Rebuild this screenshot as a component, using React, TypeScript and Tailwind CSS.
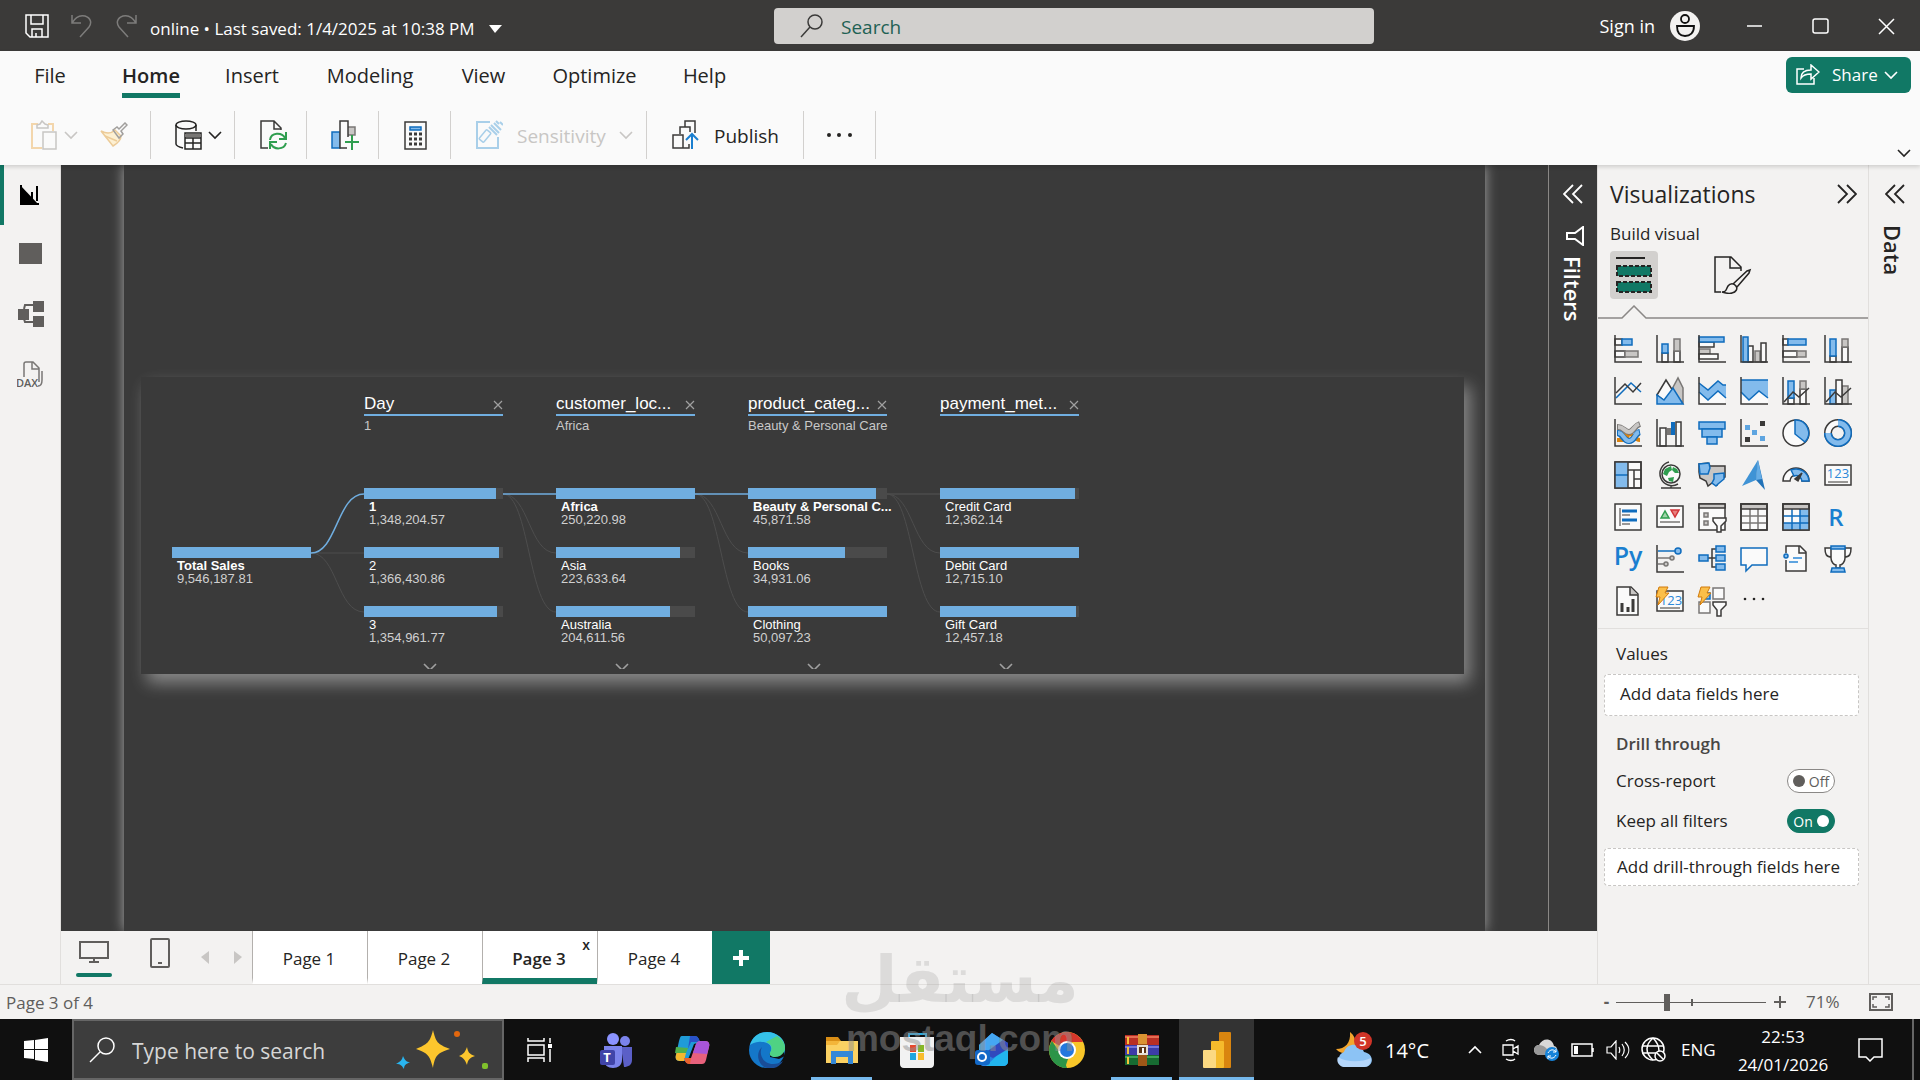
import { useState, type ReactNode } from "react";
import clsx from "clsx";

const DARK = "#3b3a39";
const BLUE = "#83bbec";
const EDGE = "#0f6cbd";
const GRAY = "#c8c6c4";
const GRAY_EDGE = "#797775";
const PAPER = "#fafafa";

type IconProps = {
  children: ReactNode;
  w?: number;
  h?: number;
  className?: string;
};

function Icon({ children, w = 28, h = 28, className }: IconProps) {
  return (
    <svg
      width={w}
      height={h}
      viewBox={`0 0 ${w} ${h}`}
      fill="none"
      stroke="currentColor"
      strokeWidth="1.5"
      className={clsx("shrink-0", className)}
      aria-hidden="true"
    >
      {children}
    </svg>
  );
}

function Chevron({ className, w = 14 }: { className?: string; w?: number }) {
  return (
    <svg width={w} height="9" viewBox="0 0 14 9" fill="none" stroke="currentColor" strokeWidth="1.6" className={clsx("shrink-0", className)} aria-hidden="true">
      <path d="M1 1l6 6 6-6" />
    </svg>
  );
}

function DoubleChevron({ flip }: { flip?: boolean }) {
  return (
    <Icon w={20} h={20} className={flip ? "rotate-180" : ""}>
      <path d="M10 1L1 10l9 9M19 1l-9 9 9 9" strokeWidth="1.8" />
    </Icon>
  );
}

type BarProps = {
  x: number;
  y: number;
  w: number;
  h: number;
  tone: "blue" | "gray" | "white";
};

function Bar({ x, y, w, h, tone }: BarProps) {
  const fill = tone === "blue" ? BLUE : tone === "gray" ? GRAY : PAPER;
  const stroke = tone === "blue" ? EDGE : tone === "gray" ? GRAY_EDGE : DARK;
  return <rect x={x} y={y} width={w} height={h} fill={fill} stroke={stroke} />;
}

const axis = <path d="M1 0V27H28" stroke={DARK} />;

const funnel = (
  <path d="M15 15h13v3l-5 5v6h-4v-6l-4-5z" fill={PAPER} stroke={DARK} />
);

const bolt = (
  <path d="M3 0h9l-3 6h4L2 18l2-8H0z" fill="#fbbf4a" stroke="#d17a0a" strokeWidth="1" />
);

const visuals: { name: string; art: ReactNode }[] = [
  {
    name: "Stacked bar chart",
    art: (
      <>
        <Bar x={1} y={4} w={7} h={6} tone="white" />
        <Bar x={8} y={4} w={10} h={6} tone="blue" />
        <Bar x={1} y={16} w={10} h={6} tone="white" />
        <Bar x={11} y={16} w={13} h={6} tone="gray" />
        {axis}
      </>
    ),
  },
  {
    name: "Stacked column chart",
    art: (
      <>
        <Bar x={6} y={18} w={6} h={9} tone="white" />
        <Bar x={6} y={9} w={6} h={9} tone="blue" />
        <Bar x={18} y={16} w={6} h={11} tone="white" />
        <Bar x={18} y={4} w={6} h={12} tone="gray" />
        {axis}
      </>
    ),
  },
  {
    name: "Clustered bar chart",
    art: (
      <>
        <Bar x={1} y={7} w={15} h={5} tone="white" />
        <Bar x={1} y={14} w={11} h={5} tone="gray" />
        <Bar x={1} y={19} w={19} h={5} tone="white" />
        <Bar x={1} y={2} w={25} h={5} tone="blue" />
        {axis}
      </>
    ),
  },
  {
    name: "Clustered column chart",
    art: (
      <>
        <Bar x={8} y={11} w={5} h={16} tone="white" />
        <Bar x={15} y={16} w={5} h={11} tone="gray" />
        <Bar x={21} y={8} w={5} h={19} tone="white" />
        <Bar x={3} y={2} w={5} h={25} tone="blue" />
        {axis}
      </>
    ),
  },
  {
    name: "100% stacked bar chart",
    art: (
      <>
        <Bar x={1} y={4} w={5} h={6} tone="white" />
        <Bar x={6} y={4} w={18} h={6} tone="blue" />
        <Bar x={1} y={16} w={14} h={6} tone="white" />
        <Bar x={15} y={16} w={9} h={6} tone="gray" />
        {axis}
      </>
    ),
  },
  {
    name: "100% stacked column chart",
    art: (
      <>
        <Bar x={6} y={21} w={6} h={6} tone="white" />
        <Bar x={6} y={4} w={6} h={17} tone="blue" />
        <Bar x={18} y={12} w={6} h={15} tone="white" />
        <Bar x={18} y={4} w={6} h={8} tone="gray" />
        {axis}
      </>
    ),
  },
  {
    name: "Line chart",
    art: (
      <>
        <path d="M2 21L17 6l10 9" stroke={EDGE} />
        <path d="M2 16l9-9 8 8 8-9" stroke={DARK} />
        {axis}
      </>
    ),
  },
  {
    name: "Area chart",
    art: (
      <>
        <path d="M15 14l7-13 5 10v15z" fill={GRAY} stroke={GRAY_EDGE} />
        <path d="M1 18L10 3l9 14-9 8z" fill={PAPER} stroke={DARK} />
        <path d="M1 18l7 5 9-12 10 16H1z" fill={BLUE} stroke={EDGE} />
      </>
    ),
  },
  {
    name: "Stacked area chart",
    art: (
      <>
        <path d="M1 17l9 6 10-10 7 6v8H1z" fill={PAPER} stroke="none" />
        <path d="M1 6l9 7L20 4l5 4h3v13l-8-7-10 9-9-8z" fill={BLUE} stroke="none" />
        <path d="M1 6l9 7L20 4l5 4h3M1 15l9 8 10-9 8 7" stroke={EDGE} />
        {axis}
      </>
    ),
  },
  {
    name: "100% stacked area chart",
    art: (
      <>
        <path d="M1 15l8 8 10-9 9 7v6H1z" fill={PAPER} stroke="none" />
        <path d="M1 3h27v18l-9-7-10 9-8-8z" fill={BLUE} stroke="none" />
        <path d="M1 3h27M1 15l8 8 10-9 9 7" stroke={EDGE} />
        {axis}
      </>
    ),
  },
  {
    name: "Line and stacked column chart",
    art: (
      <>
        <Bar x={6} y={21} w={6} h={6} tone="white" />
        <Bar x={6} y={4} w={6} h={17} tone="blue" />
        <Bar x={18} y={12} w={6} h={15} tone="white" />
        <Bar x={18} y={4} w={6} h={8} tone="gray" />
        <path d="M2 25l9-10 6 5 10-9" stroke={DARK} />
        {axis}
      </>
    ),
  },
  {
    name: "Line and clustered column chart",
    art: (
      <>
        <Bar x={6} y={13} w={6} h={14} tone="blue" />
        <Bar x={18} y={9} w={6} h={18} tone="gray" />
        <Bar x={12} y={3} w={6} h={24} tone="white" />
        <path d="M2 25l9-10 6 5 10-9" stroke={DARK} />
        {axis}
      </>
    ),
  },
  {
    name: "Ribbon chart",
    art: (
      <>
        <path d="M3 15h5c3 0 5 6 8 6s4-6 10-6M3 21h6c4 0 4-6 7-6s4 6 10 6" stroke="#d9820f" strokeWidth="4" />
        <path d="M3 8c6 0 8 5 12 5s5-6 11-8" stroke={GRAY_EDGE} strokeWidth="6" />
        <path d="M4 8c6 0 7 5 11 5s5-6 10-8" stroke={GRAY} strokeWidth="4" />
        <path d="M3 14c6 0 6 8 12 8s6-8 11-9" stroke={EDGE} strokeWidth="6" />
        <path d="M4 14c6 0 6 8 11 8s6-8 10-9" stroke={BLUE} strokeWidth="4" />
        {axis}
      </>
    ),
  },
  {
    name: "Waterfall chart",
    art: (
      <>
        <Bar x={4} y={9} w={6} h={18} tone="white" />
        <rect x="11" y="9" width="4" height="7" fill={GRAY_EDGE} stroke="none" />
        <rect x="15" y="3" width="4" height="13" fill={EDGE} stroke="none" />
        <Bar x={20} y={3} w={5} h={24} tone="white" />
        {axis}
      </>
    ),
  },
  {
    name: "Funnel",
    art: (
      <>
        <Bar x={1} y={3} w={26} h={7} tone="blue" />
        <Bar x={4} y={10} w={20} h={8} tone="blue" />
        <Bar x={9} y={18} w={10} h={7} tone="blue" />
      </>
    ),
  },
  {
    name: "Scatter chart",
    art: (
      <>
        <g stroke="none">
          <path d="M20 2h5v5h-5zM5 18h5v5H5z" fill={DARK} />
          <path d="M5 6h5v5H5zM12 11h5v5h-5zM20 17h5v5h-5z" fill="#5ea5e0" />
        </g>
        {axis}
      </>
    ),
  },
  {
    name: "Pie chart",
    art: (
      <>
        <circle cx="14" cy="14" r="13" fill={PAPER} stroke={DARK} />
        <path d="M13 1a13 13 0 0 1 10 22L13 15z" fill={BLUE} stroke={EDGE} />
      </>
    ),
  },
  {
    name: "Donut chart",
    art: (
      <>
        <circle cx="14" cy="14" r="10" stroke={DARK} strokeWidth="8" />
        <circle cx="14" cy="14" r="10" stroke={PAPER} strokeWidth="5" />
        <path d="M14 4a10 10 0 1 1-10 10" stroke={EDGE} strokeWidth="8" />
        <path d="M14 4a10 10 0 1 1-10 10" stroke={BLUE} strokeWidth="5" />
      </>
    ),
  },
  {
    name: "Treemap",
    art: (
      <>
        <rect x="1" y="1" width="26" height="26" fill={PAPER} stroke={DARK} />
        <path d="M1 1h13v26H1z" fill={BLUE} stroke="none" />
        <path d="M1 14h13" stroke={EDGE} />
        <path d="M14 1v26M14 9h13M20 9v18M20 18h7" stroke={DARK} />
        <rect x="1" y="1" width="26" height="26" stroke={DARK} />
      </>
    ),
  },
  {
    name: "Map",
    art: (
      <>
        <circle cx="15" cy="13" r="9" fill={PAPER} stroke={DARK} />
        <path d="M9 8l6-3 1 4-3 2-2 4-4-2zM17 6l4 2 2 4-4 0-3-3zM12 17l6-1-1 5-4-1z" fill="#2f9e4f" stroke="none" />
        <path d="M13 1a12 12 0 1 0 9 22M15 24v3M5 27h20" stroke={DARK} />
      </>
    ),
  },
  {
    name: "Filled map",
    art: (
      <>
        <path d="M1 3l9-1 2 3h15v11l-6 3-2 5-5-2-4 3-2-5-6-3-1-6z" fill={GRAY} stroke={DARK} />
        <path d="M1 3l10-1 1 5-2 6H2zM16 13l10-1v6l-6 5-2 2-4-3 2-4z" fill={BLUE} stroke={EDGE} />
      </>
    ),
  },
  {
    name: "Azure map",
    art: (
      <g stroke="none">
        <path d="M18-1L2 25l14-6z" fill="#3f93d5" />
        <path d="M18-1l7 30-9-10z" fill="#2072b8" />
        <path d="M18-1l4 19-6 1z" fill="#65ade6" />
      </g>
    ),
  },
  {
    name: "Gauge",
    art: (
      <>
        <path d="M1 20a13 13 0 0 1 26 0h-7a6 6 0 0 0-12 0z" fill={PAPER} stroke={DARK} />
        <path d="M9 9a13 13 0 0 1 18 11h-7a6 6 0 0 0-8-5z" fill={BLUE} stroke={EDGE} />
        <path d="M20 12l-4 8-3-2z" fill={DARK} stroke={DARK} />
      </>
    ),
  },
  {
    name: "Card",
    art: (
      <>
        <rect x="1" y="4" width="26" height="20" fill={PAPER} stroke={DARK} />
        <text x="14" y="17" textAnchor="middle" fontSize="13" fill="#2b88d8" stroke="none">123</text>
        <path d="M4 21h20" stroke={GRAY_EDGE} />
      </>
    ),
  },
  {
    name: "Multi-row card",
    art: (
      <>
        <rect x="1" y="1" width="26" height="26" fill={PAPER} stroke={DARK} />
        <path d="M6 5v18M8 12h8M8 21h8" stroke={GRAY_EDGE} />
        <path d="M8 8h15M8 17h15" stroke={EDGE} strokeWidth="3" />
      </>
    ),
  },
  {
    name: "KPI",
    art: (
      <>
        <rect x="1" y="3" width="26" height="21" fill={PAPER} stroke={DARK} />
        <path d="M5 15l4-7 4 7z" fill="#9fd3a9" stroke="#2f9e4f" />
        <path d="M15 7h8l-4 7z" fill="#e8807e" stroke="#d13438" />
        <path d="M4 19h20" stroke={GRAY_EDGE} />
      </>
    ),
  },
  {
    name: "Slicer",
    art: (
      <>
        <rect x="1" y="1" width="26" height="26" fill={PAPER} stroke={DARK} />
        <path d="M1 1h26v4H1z" fill={GRAY} stroke={DARK} />
        <path d="M6 10h4v4H6zM6 18h4v4H6z" fill={GRAY} stroke={GRAY_EDGE} />
        {funnel}
      </>
    ),
  },
  {
    name: "Table",
    art: (
      <>
        <rect x="1" y="1" width="26" height="26" fill={PAPER} stroke={DARK} />
        <path d="M1 13h26M1 20h26M10 6v21M18 6v21" stroke={GRAY_EDGE} />
        <path d="M1 1h26v5H1z" fill={GRAY} stroke={DARK} />
        <rect x="1" y="1" width="26" height="26" stroke={DARK} />
      </>
    ),
  },
  {
    name: "Matrix",
    art: (
      <>
        <rect x="1" y="1" width="26" height="26" fill={PAPER} stroke={DARK} />
        <path d="M18 6h9v21H1v-7h17z" fill={BLUE} stroke="none" />
        <path d="M1 13h26M1 20h26M10 6v21M18 6v21" stroke={EDGE} />
        <path d="M1 1h26v5H1z" fill={GRAY} stroke={DARK} />
        <rect x="1" y="1" width="26" height="26" stroke={DARK} />
      </>
    ),
  },
  {
    name: "R script visual",
    art: <text x="12" y="23" textAnchor="middle" fontSize="24" fontWeight="600" fill="#1a7fd0" stroke="none">R</text>,
  },
  {
    name: "Python visual",
    art: <text x="14" y="20" textAnchor="middle" fontSize="25" fontWeight="600" fill="#1a7fd0" stroke="none">Py</text>,
  },
  {
    name: "Key influencers",
    art: (
      <>
        <path d="M2 6h17" stroke={EDGE} />
        <circle cx="22" cy="6" r="3" fill={BLUE} stroke={EDGE} />
        <path d="M2 13h12M2 19h6" stroke={GRAY_EDGE} />
        <circle cx="16" cy="13" r="2" fill={GRAY} stroke={GRAY_EDGE} />
        <circle cx="10" cy="19" r="2" fill={GRAY} stroke={GRAY_EDGE} />
        {axis}
      </>
    ),
  },
  {
    name: "Decomposition tree",
    art: (
      <>
        <path d="M10 13h8M18 4h-4v18h4" stroke={DARK} />
        <Bar x={1} y={10} w={9} h={6} tone="blue" />
        <Bar x={18} y={1} w={9} h={6} tone="blue" />
        <Bar x={18} y={10} w={9} h={6} tone="blue" />
        <Bar x={18} y={19} w={9} h={6} tone="blue" />
      </>
    ),
  },
  {
    name: "Q&A",
    art: <path d="M1 3h26v17H12l-6 6v-6H1z" fill={PAPER} stroke={EDGE} />,
  },
  {
    name: "Narrative",
    art: (
      <>
        <path d="M4 8V1h14l6 6v19H4V15" fill={PAPER} stroke={DARK} />
        <path d="M17 1v7h7" stroke={DARK} />
        <circle cx="4" cy="11" r="2" fill={BLUE} stroke={EDGE} />
        <path d="M11 13h9M7 17h9" stroke="#2b88d8" />
      </>
    ),
  },
  {
    name: "Metrics",
    art: (
      <>
        <path d="M8 3H1c0 6 1 9 7 9M20 3h7c0 6-1 9-7 9" fill={PAPER} stroke={DARK} />
        <path d="M7 3h14v10c0 4-3 7-5 7v3h-4v-3c-2 0-5-3-5-7z" fill={PAPER} stroke={DARK} />
        <path d="M7 1h14v3H7zM8 23h12l1 4H7z" fill={BLUE} stroke={EDGE} />
      </>
    ),
  },
  {
    name: "Paginated report",
    art: (
      <>
        <path d="M3 0h14l7 7v21H3z" fill={PAPER} stroke={DARK} />
        <path d="M16 0v8h8" fill={GRAY} stroke={DARK} />
        <path d="M8 16v9M14 20v5M19 12v13" stroke={DARK} strokeWidth="3" />
      </>
    ),
  },
  {
    name: "Card (new)",
    art: (
      <>
        <rect x="1" y="4" width="26" height="20" fill={PAPER} stroke={DARK} />
        <text x="15" y="18" textAnchor="middle" fontSize="13" fill="#2b88d8" stroke="none">123</text>
        <path d="M4 21h20" stroke={GRAY_EDGE} />
        {bolt}
      </>
    ),
  },
  {
    name: "Button slicer",
    art: (
      <>
        <path d="M15 1h11v11H15zM1 15h11v11H1z" fill={PAPER} stroke={GRAY_EDGE} />
        <path d="M7 6h5v6H7z" fill={BLUE} stroke={EDGE} />
        {funnel}
        {bolt}
      </>
    ),
  },
  {
    name: "Get more visuals",
    art: (
      <g fill="#252423" stroke="none">
        <circle cx="5" cy="12" r="1.3" />
        <circle cx="14" cy="12" r="1.3" />
        <circle cx="23" cy="12" r="1.3" />
      </g>
    ),
  },
];

type TreeNode = {
  label: string;
  value: string;
  fill: number;
  selected?: boolean;
};

type Level = {
  title: string;
  picked: string;
  nodes: TreeNode[];
};

const levels: Level[] = [
  {
    title: "Day",
    picked: "1",
    nodes: [
      { label: "1", value: "1,348,204.57", fill: 95, selected: true },
      { label: "2", value: "1,366,430.86", fill: 97 },
      { label: "3", value: "1,354,961.77", fill: 96 },
    ],
  },
  {
    title: "customer_loc...",
    picked: "Africa",
    nodes: [
      { label: "Africa", value: "250,220.98", fill: 100, selected: true },
      { label: "Asia", value: "223,633.64", fill: 89 },
      { label: "Australia", value: "204,611.56", fill: 82 },
    ],
  },
  {
    title: "product_categ...",
    picked: "Beauty & Personal Care",
    nodes: [
      { label: "Beauty & Personal C...", value: "45,871.58", fill: 92, selected: true },
      { label: "Books", value: "34,931.06", fill: 70 },
      { label: "Clothing", value: "50,097.23", fill: 100 },
    ],
  },
  {
    title: "payment_met...",
    picked: "",
    nodes: [
      { label: "Credit Card", value: "12,362.14", fill: 97 },
      { label: "Debit Card", value: "12,715.10", fill: 100 },
      { label: "Gift Card", value: "12,457.18", fill: 98 },
    ],
  },
];

function NodeCard({ node }: { node: TreeNode }) {
  return (
    <button className="flex h-[59px] w-full flex-col justify-start text-left">
      <span className="h-[11px] bg-[#4a4a4a]">
        <span className="block h-full bg-[#70aee0]" style={{ width: `${node.fill}%` }} />
      </span>
      <span
        className={clsx(
          "mt-px pl-[5px] text-[13px] leading-[13px] whitespace-nowrap text-white",
          node.selected ? "font-bold" : "font-normal"
        )}
      >
        {node.label}
      </span>
      <span className="pl-[5px] text-[13px] leading-[13px] text-[#d0d0d0]">{node.value}</span>
    </button>
  );
}

// Connectors fill the 53px gap to the left of a level.
function Connectors({ root, active }: { root?: boolean; active: boolean }) {
  return (
    <svg width="53" height="132" viewBox="0 0 53 132" fill="none" stroke="#4d4d4d" className="mt-[111px] shrink-0" aria-hidden="true">
      {root ? (
        <>
          <path d="M0 65H53" />
          <path d="M0 65C26 65 26 124 53 124" />
          <path d="M0 65C26 65 26 6 53 6" stroke="#70aee0" strokeWidth="1.5" />
        </>
      ) : (
        <>
          <path d="M0 6C26 6 26 65 53 65" />
          <path d="M0 6C26 6 26 124 53 124" />
          <path d="M0 6H53" stroke={active ? "#70aee0" : "#4d4d4d"} strokeWidth="1.5" />
        </>
      )}
    </svg>
  );
}

function DecompositionTree() {
  return (
    <section
      aria-label="Decomposition tree"
      className="mr-[21px] ml-[17px] flex h-[297px] bg-[#3a3a3a] pl-[31px] font-['Liberation_Sans',Arial,sans-serif] shadow-[6px_9px_16px_rgba(255,255,255,0.4)]"
    >
      <div className="w-[139px] shrink-0 pt-[170px]">
        <NodeCard node={{ label: "Total Sales", value: "9,546,187.81", fill: 100, selected: true }} />
      </div>
      {levels.map((level, i) => (
        <div key={level.title} className="flex shrink-0">
          <Connectors root={i === 0} active={i < 3} />
          <div className="flex w-[139px] flex-col pt-[15px]">
            <div className="flex h-[24px] items-end justify-between border-b-2 border-[#70aee0]">
              <h3 className="text-[17px] leading-[20px] whitespace-nowrap text-white">{level.title}</h3>
              <button aria-label={`Remove ${level.title}`} className="pb-[4px] text-[#a0a0a0]">
                <Icon w={10} h={10}>
                  <path d="M1 1l8 8M9 1L1 9" strokeWidth="1.2" />
                </Icon>
              </button>
            </div>
            <p className="mt-[3px] h-[69px] text-[13px] leading-[14px] whitespace-nowrap text-[#c8c8c8]">{level.picked}</p>
            {level.nodes.map((node) => (
              <NodeCard key={node.label} node={node} />
            ))}
            <button aria-label="Scroll down" className="-mt-[2px] flex h-[6px] items-start justify-center overflow-hidden pr-[8px] text-[#a0a0a0]">
              <Chevron w={16} />
            </button>
          </div>
        </div>
      ))}
    </section>
  );
}

function TitleBar() {
  return (
    <header className="flex h-[51px] items-center bg-[#3b3a39] text-white">
      <div className="flex min-w-0 flex-[749_1_0px] items-center pl-[25px]">
        <button aria-label="Save">
          <Icon w={24} h={24}>
            <path d="M1 1h22v22H5l-4-4zM6 1v9h12V1M7 23v-8h10v8M11 19v4" />
          </Icon>
        </button>
        <button aria-label="Undo" className="ml-[22px] text-[#7d7c7b]">
          <Icon w={22} h={24}>
            <path d="M1 1v8h9M1 9c4-7 9-8 13-7 6 2 7 7 4 11l-9 10" />
          </Icon>
        </button>
        <button aria-label="Redo" className="ml-[22px] text-[#7d7c7b]">
          <Icon w={22} h={24}>
            <path d="M21 1v8h-9M21 9c-4-7-9-8-13-7-6 2-7 7-4 11l9 10" />
          </Icon>
        </button>
        <button className="ml-[13px] flex items-center gap-[14px] pt-[7px] text-[17px] leading-6 whitespace-nowrap">
          online • Last saved: 1/4/2025 at 10:38 PM
          <svg width="13" height="8" viewBox="0 0 13 8" fill="currentColor" aria-hidden="true">
            <path d="M0 0h13L6 8z" />
          </svg>
        </button>
      </div>
      <label className="mt-[1px] flex h-[36px] w-[600px] shrink-0 items-center gap-[17px] rounded-sm bg-[#d2d0ce] pl-[26px] text-[#3b3a39]">
        <Icon w={24} h={24}>
          <circle cx="15" cy="8" r="7" />
          <path d="M10 13L1 23" />
        </Icon>
        <input
          type="text"
          aria-label="Search"
          placeholder="Search"
          className="flex-1 bg-transparent pt-[2px] text-[19px] leading-[26px] outline-none placeholder:text-[#1f6154]"
        />
      </label>
      <div className="flex min-w-0 flex-[522_1_0px] items-center justify-end pr-[24px]">
        <button className="flex items-center gap-[15px] text-[18px] leading-[24px] whitespace-nowrap">
          Sign in
          <svg width="30" height="30" viewBox="0 0 30 30" fill="none" stroke="#111" strokeWidth="1.8" aria-hidden="true">
            <circle cx="15" cy="15" r="15" fill="#f3f2f1" stroke="none" />
            <circle cx="15" cy="8" r="4" />
            <path d="M7 15h17c0 7-4 10-9 10s-8-3-8-10z" />
          </svg>
        </button>
        <button aria-label="Minimize" className="ml-[46px]">
          <Icon w={18} h={18}><path d="M1 9h15" /></Icon>
        </button>
        <button aria-label="Maximize" className="ml-[48px]">
          <Icon w={18} h={18}><rect x="1" y="2" width="15" height="14" rx="2" /></Icon>
        </button>
        <button aria-label="Close" className="ml-[48px]">
          <Icon w={18} h={18}><path d="M1 2l15 15M16 2L1 17" /></Icon>
        </button>
      </div>
    </header>
  );
}

const menu = [
  { label: "File", cell: "w-[30px] mr-[57px]" },
  { label: "Home", cell: "w-[58px] mr-[46px]" },
  { label: "Insert", cell: "w-[52px] mr-[48px]" },
  { label: "Modeling", cell: "w-[88px] mr-[47px]" },
  { label: "View", cell: "w-[45px] mr-[46px]" },
  { label: "Optimize", cell: "w-[85px] mr-[46px]" },
  { label: "Help", cell: "w-[43px]" },
];

function Ribbon() {
  const group = "flex h-[48px] items-center border-r border-[#d2d0ce]";
  return (
    <div className="relative z-10 bg-[#fafafa] shadow-[0_2px_4px_rgba(0,0,0,0.15)]">
      <div className="flex h-[60px] items-start justify-between pr-[9px] pl-[35px]">
        <nav className="flex text-[20px] text-[#252423]">
          {menu.map((item) => (
            <button
              key={item.label}
              className={clsx(
                "flex h-[47px] justify-center border-b-5 pt-[12px] leading-[26px] whitespace-nowrap",
                item.cell,
                item.label === "Home" ? "border-[#117865] font-semibold" : "border-transparent"
              )}
            >
              {item.label}
            </button>
          ))}
        </nav>
        <button className="mt-[6px] flex h-[36px] w-[125px] items-center rounded-md bg-[#117865] pl-[10px] text-[17px] text-white">
          <Icon w={24} h={22}>
            <path d="M8 5H1v15h17v-6M5 14c0-6 4-8 10-8V1l8 7-8 7v-5c-5 0-8 1-10 4z" />
          </Icon>
          <span className="ml-[12px] w-[52px] text-left">Share</span>
          <Chevron />
        </button>
      </div>
      <div className="flex h-[54px] items-start">
        <div className={clsx(group, "w-[151px] pl-[31px]")}>
          <button aria-label="Paste" className="flex items-center gap-[7px] text-[#c8c6c4]">
            <Icon w={26} h={30}>
              <path d="M7 4H1v24h10M17 4h5v7" stroke="#f3d6ac" strokeWidth="2" />
              <path d="M6 8V5l3-1 2-3 3 3 3 1v3zM12 12h13v17H12z" />
            </Icon>
            <Chevron />
          </button>
          <button aria-label="Format painter" className="ml-[22px]">
            <Icon w={28} h={26} className="text-[#a19f9d]">
              <path d="M1 9l12 15c5-3 8-7 8-10l-6-6c-3 3-8 4-14 1z" fill="#fdf0d2" stroke="#eccb98" />
              <path d="M5 14l12 5" stroke="#eccb98" />
              <path d="M13 8l4-3 2 2 6-6 2 2-6 6 2 3-4 4z" />
            </Icon>
          </button>
        </div>
        <div className={clsx(group, "w-[84px] pl-[24px]")}>
          <button aria-label="Get data" className="flex items-center gap-[6px] text-[#252423]">
            <Icon w={27} h={30}>
              <ellipse cx="11" cy="5" rx="10" ry="4" />
              <path d="M1 5v19c0 2 3 3 7 4M21 5v6M10 13h16v16H10zM10 18h16M10 23h16M18 18v11" />
              <path d="M10 14h16v3H10z" fill={GRAY_EDGE} stroke="none" />
            </Icon>
            <Chevron />
          </button>
        </div>
        <div className={clsx(group, "w-[72px] pl-[25px]")}>
          <button aria-label="Refresh">
            <Icon w={28} h={30} className="text-[#3b3a39]">
              <path d="M8 28H1V1h13l7 7v2M14 1v8h7" />
              <path d="M10 20c1-8 12-8 15-2M26 12v7h-7M26 23c-2 7-12 7-15 1M10 29v-7h7" stroke="#2f9e4f" strokeWidth="2" />
            </Icon>
          </button>
        </div>
        <div className={clsx(group, "w-[72px] pl-[24px]")}>
          <button aria-label="New visual">
            <Icon w={29} h={30}>
              <rect x="16" y="7" width="8" height="8" fill={GRAY} stroke={GRAY_EDGE} />
              <rect x="1" y="12" width="8" height="16" fill={BLUE} stroke={EDGE} />
              <path d="M17 17V1H9v27h7" fill={PAPER} stroke={DARK} />
              <path d="M21 15v15M14 22h14" stroke="#2f9e4f" strokeWidth="2" />
            </Icon>
          </button>
        </div>
        <div className={clsx(group, "w-[72px] pl-[25px]")}>
          <button aria-label="New measure">
            <Icon w={23} h={29} className="text-[#3b3a39]">
              <rect x="1" y="1" width="21" height="27" />
              <rect x="6" y="6" width="11" height="3" fill={BLUE} stroke={EDGE} />
              <path d="M5 13h13M5 18h13M5 23h13" strokeWidth="3" strokeDasharray="3 2" />
            </Icon>
          </button>
        </div>
        <div className={clsx(group, "w-[196px] pl-[25px]")}>
          <button disabled className="flex items-center text-[19px] text-[#c8c6c4]">
            <Icon w={27} h={30} className="text-[#a9cfe9]">
              <path d="M14 2H1v26h21V17" strokeWidth="2" />
              <rect x="-3" y="-6" width="6" height="12" rx="1" transform="translate(9 16) rotate(40)" />
              <path d="M13 7l8 8M15 5l8 8M18 3l7 7M20 1l3 3M24 2l3 3" strokeWidth="2" />
            </Icon>
            <span className="ml-[14px] w-[102px] pt-[2px] text-left">Sensitivity</span>
            <Chevron />
          </button>
        </div>
        <div className={clsx(group, "w-[157px] pl-[25px]")}>
          <button className="flex items-center gap-[14px] text-[19px] text-[#252423]">
            <Icon w={28} h={30}>
              <path d="M13 7V1h10v12M8 14V7h10v5M1 15h10v13H1zM11 15v13h6v-4" stroke={DARK} />
              <path d="M20 29V15M14 20l6-6 6 6" stroke="#1a7fd0" strokeWidth="2" />
            </Icon>
            <span className="pt-[2px]">Publish</span>
          </button>
        </div>
        <div className={clsx(group, "w-[72px] pl-[22px]")}>
          <button aria-label="More options">
            <svg width="27" height="6" viewBox="0 0 27 6" fill="#252423" aria-hidden="true">
              <circle cx="3" cy="3" r="2" />
              <circle cx="13" cy="3" r="2" />
              <circle cx="24" cy="3" r="2" />
            </svg>
          </button>
        </div>
        <button aria-label="Collapse ribbon" className="mt-[38px] mr-[9px] ml-auto text-[#252423]">
          <Chevron />
        </button>
      </div>
    </div>
  );
}

function ViewRail() {
  const item = "flex h-[60px] items-center border-l-4 pl-[13px]";
  return (
    <nav className="w-[61px] shrink-0 border-r border-[#e1dfdd]">
      <button aria-label="Report view" className={clsx(item, "border-[#117865]")}>
        <Icon w={24} h={22}>
          <path d="M3 1l19 20H3z" fill="#000" stroke="none" />
          <path d="M4 1v19h18M15 8v8M20 2v15" stroke="#000" strokeWidth="2" />
        </Icon>
      </button>
      <button aria-label="Table view" className={clsx(item, "border-transparent pb-[2px]")}>
        <Icon w={26} h={24}>
          <rect x="2" y="1" width="23" height="21" fill="#605e5c" stroke="none" />
        </Icon>
      </button>
      <button aria-label="Model view" className={clsx(item, "border-transparent pb-[2px]")}>
        <Icon w={28} h={28}>
          <path d="M1 9h11v11H1zM16 1h11v11H16zM16 16h11v11H16z" fill="#605e5c" stroke="none" />
          <path d="M16 5H8l-1 4M16 22H8l-1-3" stroke="#605e5c" strokeWidth="2" />
        </Icon>
      </button>
      <button aria-label="DAX query view" className={clsx(item, "border-transparent")}>
        <Icon w={28} h={28} className="text-[#797775]">
          <path d="M7 16V3c0-1 1-2 2-2h7l6 6v14M15 1v7h7M25 10v9c0 4-1 6-4 6" />
          <text x="-1" y="26" fontSize="11" fontWeight="600" fill="#605e5c" stroke="none">DAX</text>
        </Icon>
      </button>
    </nav>
  );
}

function PageTabs() {
  const [current, setCurrent] = useState("Page 3");
  return (
    <div className="flex h-[53px] items-stretch bg-[#f3f2f1]">
      <button aria-label="Desktop layout" className="ml-[15px] flex w-[36px] flex-col items-center pt-[10px]">
        <Icon w={30} h={22} className="text-[#605e5c]">
          <path d="M1 1h28v16H1zM15 17v4M10 21h10" strokeWidth="2" />
        </Icon>
        <span className="mt-[10px] h-[4px] w-full rounded-sm bg-[#117865]" />
      </button>
      <button aria-label="Mobile layout" className="ml-[38px] flex pt-[7px]">
        <Icon w={20} h={30} className="text-[#605e5c]">
          <rect x="1" y="1" width="18" height="28" rx="1" strokeWidth="2" />
          <path d="M8 25h4" strokeWidth="2" />
        </Icon>
      </button>
      <button aria-label="Previous page" className="ml-[31px]">
        <svg width="8" height="13" viewBox="0 0 8 13" fill="#c8c6c4"><path d="M8 0v13L0 6z" /></svg>
      </button>
      <button aria-label="Next page" className="mr-[10px] ml-[25px]">
        <svg width="8" height="13" viewBox="0 0 8 13" fill="#c8c6c4"><path d="M0 0v13l8-7z" /></svg>
      </button>
      {["Page 1", "Page 2", "Page 3", "Page 4"].map((page) => (
        <button
          key={page}
          onClick={() => setCurrent(page)}
          className={clsx(
            "relative w-[115px] border-b-6 border-l border-l-[#b3b0ad] bg-white pt-[8px] pr-[2px] text-[17px] text-[#252423]",
            page === current ? "border-b-[#117865] font-semibold" : "border-b-white"
          )}
        >
          {page}
          {page === current && <span className="absolute top-[4px] right-[7px] text-[14px] leading-5">x</span>}
        </button>
      ))}
      <button aria-label="New page" className="flex w-[58px] items-center justify-center bg-[#117865] text-white">
        <Icon w={16} h={16}><path d="M8 0v16M0 8h16" strokeWidth="4" /></Icon>
      </button>
    </div>
  );
}

function Toggle({ label, initial }: { label: string; initial: boolean }) {
  const [on, setOn] = useState(initial);
  return (
    <label className="flex h-[40px] items-center justify-between pr-[33px] pl-[18px]">
      {label}
      <input type="checkbox" className="sr-only" checked={on} onChange={() => setOn(!on)} />
      <span
        className={clsx(
          "flex h-[24px] w-[48px] items-center justify-center gap-[4px] rounded-full border text-[14px]",
          on ? "flex-row-reverse border-[#117865] bg-[#117865] text-white" : "border-[#8a8886] bg-white text-[#605e5c]"
        )}
      >
        <span className={clsx("h-[12px] w-[12px] rounded-full", on ? "bg-white" : "bg-[#605e5c]")} />
        {on ? "On" : "Off"}
      </span>
    </label>
  );
}

function VisualizationsPane() {
  const well = "mr-[9px] ml-[6px] flex items-center rounded-sm border border-dashed border-[#c8c6c4] bg-white whitespace-nowrap";
  return (
    <aside className="w-[272px] shrink-0 border-r border-l border-[#e1dfdd] text-[17px] text-[#252423]">
      <div className="flex h-[58px] items-center justify-between pr-[11px] pl-[12px]">
        <h2 className="text-[23px] font-medium">Visualizations</h2>
        <button aria-label="Collapse pane"><DoubleChevron flip /></button>
      </div>
      <h3 className="-mt-px pl-[12px] leading-[24px] font-medium">Build visual</h3>
      <div className="mt-[5px] flex pl-[12px]">
        <button aria-label="Build visual" className="flex h-[48px] w-[48px] items-center justify-center rounded-sm bg-[#d2d0ce]">
          <Icon w={36} h={36}>
            <path d="M0 1h29" strokeWidth="2" />
            <path d="M1 9h34v10H1zM1 25h34v10H1z" fill="#117865" strokeWidth="2" strokeDasharray="4 2" />
          </Icon>
        </button>
        <button aria-label="Format visual" className="ml-[56px]">
          <Icon w={38} h={38}>
            <path d="M7 36H1V1h16l10 10v4M16 1v11h11" />
            <path d="M8 36c5 0 4-3 6-6s6-3 8 0 0 6-4 7c-3 1-7 0-10-1zM19 28L33 15l3-1-1 3-12 14" />
          </Icon>
        </button>
      </div>
      <svg width="270" height="14" viewBox="0 0 270 14" fill="none" stroke="#8a8886" strokeWidth="1.5" className="mt-[6px] block" aria-hidden="true">
        <path d="M0 13h24l12-12 12 12h222" />
      </svg>
      <div className="grid grid-cols-[repeat(6,28px)] gap-[14px] border-b border-[#e1dfdd] px-[16px] pt-[16px] pb-[13px]">
        {visuals.map((v) => (
          <button key={v.name} aria-label={v.name} className="h-[28px] w-[28px]">
            <Icon className="overflow-visible">{v.art}</Icon>
          </button>
        ))}
      </div>
      <h4 className="pt-[13px] pl-[18px] leading-[24px]">Values</h4>
      <div className={clsx(well, "mt-[8px] h-[42px] pb-[3px] pl-[15px]")}>Add data fields here</div>
      <h4 className="mt-[16px] pl-[18px] leading-[24px] font-semibold text-[#484644]">Drill through</h4>
      <div className="mt-[5px]">
        <Toggle label="Cross-report" initial={false} />
        <Toggle label="Keep all filters" initial={true} />
      </div>
      <div className={clsx(well, "mt-[7px] h-[38px] pl-[12px]")}>Add drill-through fields here</div>
    </aside>
  );
}

function StatusBar() {
  return (
    <footer className="flex h-[35px] items-center border-t border-[#e1dfdd] pr-[27px] pl-[6px] text-[17px] text-[#605e5c]">
      <span className="pt-[2px]">Page 3 of 4</span>
      <button aria-label="Zoom out" className="ml-auto w-[7px] font-bold">-</button>
      <div className="relative ml-[6px] flex items-center">
        <input
          type="range"
          aria-label="Zoom"
          min={0}
          max={100}
          defaultValue={33}
          className="h-[18px] w-[150px] appearance-none bg-transparent [&::-webkit-slider-runnable-track]:h-px [&::-webkit-slider-runnable-track]:bg-[#605e5c] [&::-webkit-slider-thumb]:-mt-[8px] [&::-webkit-slider-thumb]:h-[17px] [&::-webkit-slider-thumb]:w-[6px] [&::-webkit-slider-thumb]:appearance-none [&::-webkit-slider-thumb]:bg-[#605e5c]"
        />
        <span className="absolute left-1/2 h-[7px] w-[2px] bg-[#605e5c]" />
      </div>
      <button aria-label="Zoom in" className="ml-[8px]">
        <Icon w={12} h={12}><path d="M6 0v12M0 6h12" strokeWidth="2" /></Icon>
      </button>
      <span className="ml-[20px] w-[63px]">71%</span>
      <button aria-label="Fit to page">
        <Icon w={24} h={18}>
          <path d="M1 1h22v16H1z" strokeWidth="2" />
          <path d="M4 7V4h4M16 4h4v3M20 11v3h-4M8 14H4v-3" />
        </Icon>
      </button>
    </footer>
  );
}

const apps: { name: string; open?: boolean; active?: boolean; art: ReactNode }[] = [
  {
    name: "Teams",
    art: (
      <>
        <circle cx="26" cy="9" r="5" fill="#7b83eb" />
        <path d="M22 15h11v13c0 5-4 7-8 7z" fill="#5b5fc7" />
        <circle cx="14" cy="7" r="6" fill="#8b93ff" />
        <path d="M5 14h18v14c0 5-4 8-9 8s-9-3-9-8z" fill="#7b83eb" />
        <rect x="1" y="18" width="15" height="15" rx="2" fill="#4044a8" />
        <text x="8" y="30" textAnchor="middle" fontSize="13" fontWeight="700" fill="#fff">T</text>
      </>
    ),
  },
  {
    name: "Copilot",
    art: (
      <>
        <path d="M8 4h12c4 0 5 3 6 6l-6 2-5 13c-1 3-3 4-5 4H6c-4 0-5-3-4-6l3-14c1-3 1-5 3-5z" fill="#1f9bd8" />
        <path d="M16 4h5c3 0 4 3 5 6h-9l-3 7z" fill="#2952c8" />
        <path d="M3 19l9 2-2 8H6c-4 0-5-3-4-6z" fill="#f5b82e" />
        <path d="M2 15l12 1-2 5-11 0z" fill="#52b04a" />
        <path d="M28 32H16c-4 0-5-3-6-6h7l5-14c1-2 2-3 5-3h4c4 0 5 3 4 6l-3 13c-1 3-2 4-4 4z" fill="#e8617c" />
        <path d="M35 15l-2 7-14-1 3-9c1-2 2-3 5-3h4c4 0 5 3 4 6z" fill="#a955d8" />
        <path d="M10 26h7l-1 6c-4 0-5-3-6-6z" fill="#e8622b" />
      </>
    ),
  },
  {
    name: "Edge",
    art: (
      <>
        <circle cx="18" cy="18" r="18" fill="#1477c9" />
        <path d="M1 13C4 4 10 0 18 0c10 0 18 7 18 15 0 6-4 10-10 10-4 0-6-2-5-4 4-7-2-11-8-11-6-1-10 2-12 3z" fill="#35c1e8" />
        <path d="M28 4c5 3 8 7 8 12 0 5-4 9-10 9-4 0-6-2-5-4 4-7 0-9-4-11z" fill="#4fd283" />
        <path d="M21 21c-1 2 1 4 5 4 4 0 7-2 9-5l1 4-6 3-9-2z" fill="#101010" />
        <path d="M13 15c-4 8 2 17 11 17 4 0 7-1 10-3-4 7-10 8-16 7C9 34 6 21 13 15z" fill="#194d98" />
      </>
    ),
  },
  {
    name: "File Explorer",
    open: true,
    art: (
      <>
        <path d="M2 5h12l3 4h-15z" fill="#d98e16" />
        <path d="M2 9h32v22H2z" fill="#fbd163" />
        <path d="M2 9h14l-3 4H2z" fill="#f3b53a" />
        <path d="M7 32V19h22v13h-5v-7H12v7z" fill="#3488d8" />
      </>
    ),
  },
  {
    name: "Microsoft Store",
    art: (
      <>
        <path d="M10 7V2h17v5" fill="none" stroke="#2aaae2" strokeWidth="2" />
        <path d="M1 5h34v27c0 2-1 4-4 4H5c-3 0-4-2-4-4z" fill="#f2f2f2" />
        <path d="M11 13h6v7h-6z" fill="#e5482d" />
        <path d="M19 13h6v7h-6z" fill="#86b828" />
        <path d="M11 21h6v7h-6z" fill="#1fa5e0" />
        <path d="M19 21h6v7h-6z" fill="#f8bc2c" />
      </>
    ),
  },
  {
    name: "Outlook",
    art: (
      <>
        <path d="M18 1l16 10v18c0 3-2 5-5 5H10c-3 0-5-2-5-5V13z" fill="#2a7fe0" />
        <path d="M18 1l11 7L5 25V13z" fill="#45a7f2" />
        <path d="M34 13v17c0 2-2 4-5 4H12z" fill="#22b5ee" />
        <path d="M29 8l5 3v6L19 26l-9-4z" fill="#3149bd" />
        <rect x="1" y="18" width="15" height="15" rx="3" fill="#1369c8" />
        <circle cx="8" cy="25" r="4" fill="none" stroke="#fff" strokeWidth="2" />
      </>
    ),
  },
  {
    name: "Chrome",
    art: (
      <>
        <circle cx="18" cy="18" r="18" fill="#f8c629" />
        <path d="M18 18L2 9C6 3 12 0 18 0c7 0 13 4 16 10H18z" fill="#d8372c" />
        <path d="M3 9l11 16 4 11C8 36 0 28 0 18c0-3 1-6 3-9z" fill="#2c9448" />
        <path d="M13 22l7 2-4 12C6 34 2 28 1 22z" fill="#2c9448" />
        <circle cx="18" cy="18" r="9" fill="#fff" />
        <circle cx="18" cy="18" r="7" fill="#2478de" />
      </>
    ),
  },
  {
    name: "WinRAR",
    open: true,
    art: (
      <>
        <path d="M1 3h34v10H1z" fill="#b92f24" />
        <path d="M1 4h34v2H1z" fill="#e56c52" />
        <path d="M1 13h34v10H1z" fill="#3c3ca8" />
        <path d="M1 14h34v2H1z" fill="#7575da" />
        <path d="M1 23h34v10H1z" fill="#176b32" />
        <path d="M1 24h34v2H1z" fill="#3fa459" />
        <path d="M4 5v7M4 15v7M4 25v7" stroke="#f5c33b" strokeWidth="2" />
        <path d="M14 2h9v32h-9z" fill="#9e5718" />
        <path d="M14 2h9v10h-9z" fill="#db9332" />
        <rect x="14" y="14" width="9" height="8" fill="#5d3515" stroke="#e5dfd5" strokeWidth="2" />
        <path d="M19 16v5" stroke="#fff" strokeWidth="2" />
      </>
    ),
  },
  {
    name: "Power BI",
    active: true,
    open: true,
    art: (
      <>
        <rect x="20" y="0" width="12" height="36" rx="1" fill="#d9850f" />
        <rect x="12" y="9" width="13" height="27" rx="1" fill="#f5bb2c" />
        <rect x="4" y="18" width="13" height="18" rx="1" fill="#fbd982" />
      </>
    ),
  },
];

function Taskbar() {
  return (
    <footer className="relative flex h-[61px] items-center bg-[#101010] text-white">
      <button aria-label="Start" className="ml-[24px]">
        <svg width="24" height="24" viewBox="0 0 24 24" fill="#fff" aria-hidden="true">
          <path d="M0 3l10-1v9H0zM11 2l13-2v11H11zM0 12h10v9L0 20zM11 12h13v12l-13-2z" />
        </svg>
      </button>
      <label className="ml-[24px] flex h-full w-[432px] items-center border-2 border-[#666] bg-[#3d3d3d] pl-[15px]">
        <Icon w={26} h={26}>
          <circle cx="17" cy="9" r="8" />
          <path d="M11 15L1 25" />
        </Icon>
        <input
          type="text"
          aria-label="Type here to search"
          placeholder="Type here to search"
          className="ml-[17px] w-[240px] bg-transparent pt-[3px] text-[21px] leading-[28px] outline-none placeholder:text-[#d6d6d6]"
        />
        <svg width="92" height="40" viewBox="0 0 92 40" className="mr-[14px] ml-auto" aria-hidden="true">
          <path d="M37 0c3 12 4 14 17 19-13 4-15 7-17 19-3-12-5-15-17-19 12-5 14-7 17-19z" fill="#fcc62d" />
          <path d="M71 17c1 5 2 7 8 9-6 2-7 4-8 9-2-5-3-7-8-9 5-2 6-4 8-9z" fill="#fcc62d" />
          <path d="M7 26c2 4 3 6 7 6-4 2-6 3-6 7-2-3-3-5-8-5 5-3 6-4 7-8z" fill="#29b5f0" />
          <circle cx="61" cy="4" r="3" fill="#e2670e" />
          <rect x="86" y="33" width="6" height="6" rx="2" fill="#80c12c" />
        </svg>
      </label>
      <button aria-label="Task view" className="ml-[23px]">
        <Icon w={26} h={26}>
          <path d="M1 1v3h16V1M1 8h16v10H1zM1 25v-4h16v4M23 1v5M23 12v13" />
          <path d="M21 7h4v4h-4z" fill="#fff" stroke="none" />
        </Icon>
      </button>
      <div className="ml-[26px] flex h-full">
        {apps.map((app) => (
          <button
            key={app.name}
            aria-label={app.name}
            className={clsx("flex h-full w-[75px] flex-col items-center justify-end", app.active && "bg-[#333]")}
          >
            <svg width="36" height="36" viewBox="0 0 36 36" className="mb-[9px]" aria-hidden="true">{app.art}</svg>
            <span className={clsx("h-[3px]", app.active ? "w-full" : "w-[61px]", app.open ? "bg-[#76b9ed]" : "bg-transparent")} />
          </button>
        ))}
      </div>
      <div className="ml-auto flex h-full items-center">
        <button className="flex items-center gap-[13px] text-[20px] leading-[28px]">
          <svg width="36" height="36" viewBox="0 0 36 36" aria-hidden="true">
            <path d="M14 0c9 7 6 20-5 21-5 0-7-2-9-4 9 0 15-6 14-17z" fill="#f3a52d" />
            <path d="M8 35a8 8 0 0 1 0-15c3-9 16-10 20 0 11 2 10 15 0 15z" fill="#8cc3f5" />
            <path d="M8 35a7 7 0 0 1-6-10c9 6 25 5 33 1 0 6-3 9-7 9z" fill="#b5d6fa" />
            <circle cx="27" cy="9" r="9" fill="#d13428" />
            <text x="27" y="14" textAnchor="middle" fontSize="13" fontWeight="600" fill="#fff">5</text>
          </svg>
          <span className="pt-[2px]">14°C</span>
        </button>
        <button aria-label="Show hidden icons" className="ml-[37px]">
          <Chevron w={18} className="rotate-180" />
        </button>
        <button aria-label="Camera" className="ml-[18px]">
          <Icon w={18} h={24}>
            <path d="M1 7h10v10H1zM11 11l5-3v8l-5-3M4 3c3-2 7-2 9 0M4 21c3 2 7 2 9 0" strokeWidth="1.3" />
          </Icon>
        </button>
        <button aria-label="OneDrive" className="ml-[14px]">
          <svg width="26" height="24" viewBox="0 0 26 24" aria-hidden="true">
            <path d="M5 17a5 5 0 0 1 0-10C8 0 18-1 20 8c5 1 4 9-1 9z" fill="#d8d8d8" />
            <path d="M5 17a5 5 0 0 1 0-10c5 0 9 4 12 10z" fill="#999" />
            <circle cx="18" cy="16" r="7" fill="#1683d9" />
            <path d="M14 15c2-4 6-4 8-1M22 11v3h-3M22 17c-2 4-6 4-8 1M14 21v-3h3" stroke="#fff" fill="none" />
          </svg>
        </button>
        <button aria-label="Battery" className="ml-[11px]">
          <Icon w={24} h={14}>
            <path d="M1 1h20v12H1zM22 5v4" />
            <path d="M3 3h4v8H3z" fill="#fff" stroke="none" />
          </Icon>
        </button>
        <button aria-label="Volume" className="ml-[11px]">
          <Icon w={24} h={20}>
            <path d="M1 7h4l5-6v18l-5-6H1zM13 7c1 2 1 4 0 6M16 4c3 4 3 8 0 12M19 2c5 5 5 11 0 16" strokeWidth="1.2" />
          </Icon>
        </button>
        <button aria-label="Network" className="ml-[11px]">
          <Icon w={26} h={26}>
            <circle cx="12" cy="12" r="11" />
            <path d="M1 9h22M1 16h14M12 1c-8 7-8 15 0 22M12 1c5 5 6 9 6 13" />
            <circle cx="19" cy="19" r="5" fill="#101010" />
            <path d="M16 16l6 6" />
          </Icon>
        </button>
        <button className="ml-[14px] w-[42px] text-left text-[17px]">ENG</button>
        <button className="ml-[4px] w-[112px] pt-[2px] text-center text-[17px] leading-[28px]">
          22:53
          <br />
          24/01/2026
        </button>
        <button aria-label="Notifications" className="ml-[19px]">
          <Icon w={26} h={24}>
            <path d="M1 1h23v18h-8l-4 4-4-4H1z" />
          </Icon>
        </button>
        <span className="ml-[28px] h-full w-[8px] border-l-2 border-[#666]" />
      </div>
      <div className="pointer-events-none absolute bottom-[19px] left-[845px] flex w-[230px] flex-col items-center text-[#808080]/20">
        <span lang="ar" className="font-['DejaVu_Sans',sans-serif] text-[65px] leading-[74px] font-bold">مستقل</span>
        <span className="font-['Liberation_Sans',Arial,sans-serif] text-[37px] leading-[44px] font-bold text-[#909090]/50">mostaql.com</span>
      </div>
    </footer>
  );
}

export default function App() {
  return (
    <div className="flex min-h-screen flex-col bg-[#f3f2f1] font-['Open_Sans','Noto_Sans',sans-serif] text-[#252423]">
      <TitleBar />
      <Ribbon />
      <main className="flex flex-1">
        <ViewRail />
        <div className="flex min-w-0 flex-1 flex-col">
          <div className="flex flex-1">
            <div className="flex min-w-0 flex-1 overflow-hidden bg-[#3a3a3a] px-[63px]">
              <div className="min-w-0 flex-1 bg-[#3a3a3a] pt-[212px] shadow-[0_0_12px_rgba(255,255,255,0.55)]">
                <DecompositionTree />
              </div>
            </div>
            <aside className="flex w-[49px] shrink-0 flex-col items-center border-l border-[#8a8886] bg-[#3a3a3a] pt-[19px] text-white">
              <button aria-label="Expand filters"><DoubleChevron /></button>
              <Icon w={20} h={20} className="mt-[22px] ml-[4px]">
                <path d="M18 1v18l-8-6H2V7h8z" strokeWidth="2" />
              </Icon>
              <h2 className="mt-[10px] text-[22px] leading-[26px] font-semibold [writing-mode:vertical-rl]">Filters</h2>
            </aside>
          </div>
          <PageTabs />
        </div>
        <VisualizationsPane />
        <aside className="flex w-[51px] shrink-0 flex-col items-center pt-[19px]">
          <button aria-label="Expand data"><DoubleChevron /></button>
          <h2 className="mt-[21px] pr-[4px] text-[22px] leading-[26px] font-semibold [writing-mode:vertical-rl]">Data</h2>
        </aside>
      </main>
      <StatusBar />
      <Taskbar />
    </div>
  );
}
